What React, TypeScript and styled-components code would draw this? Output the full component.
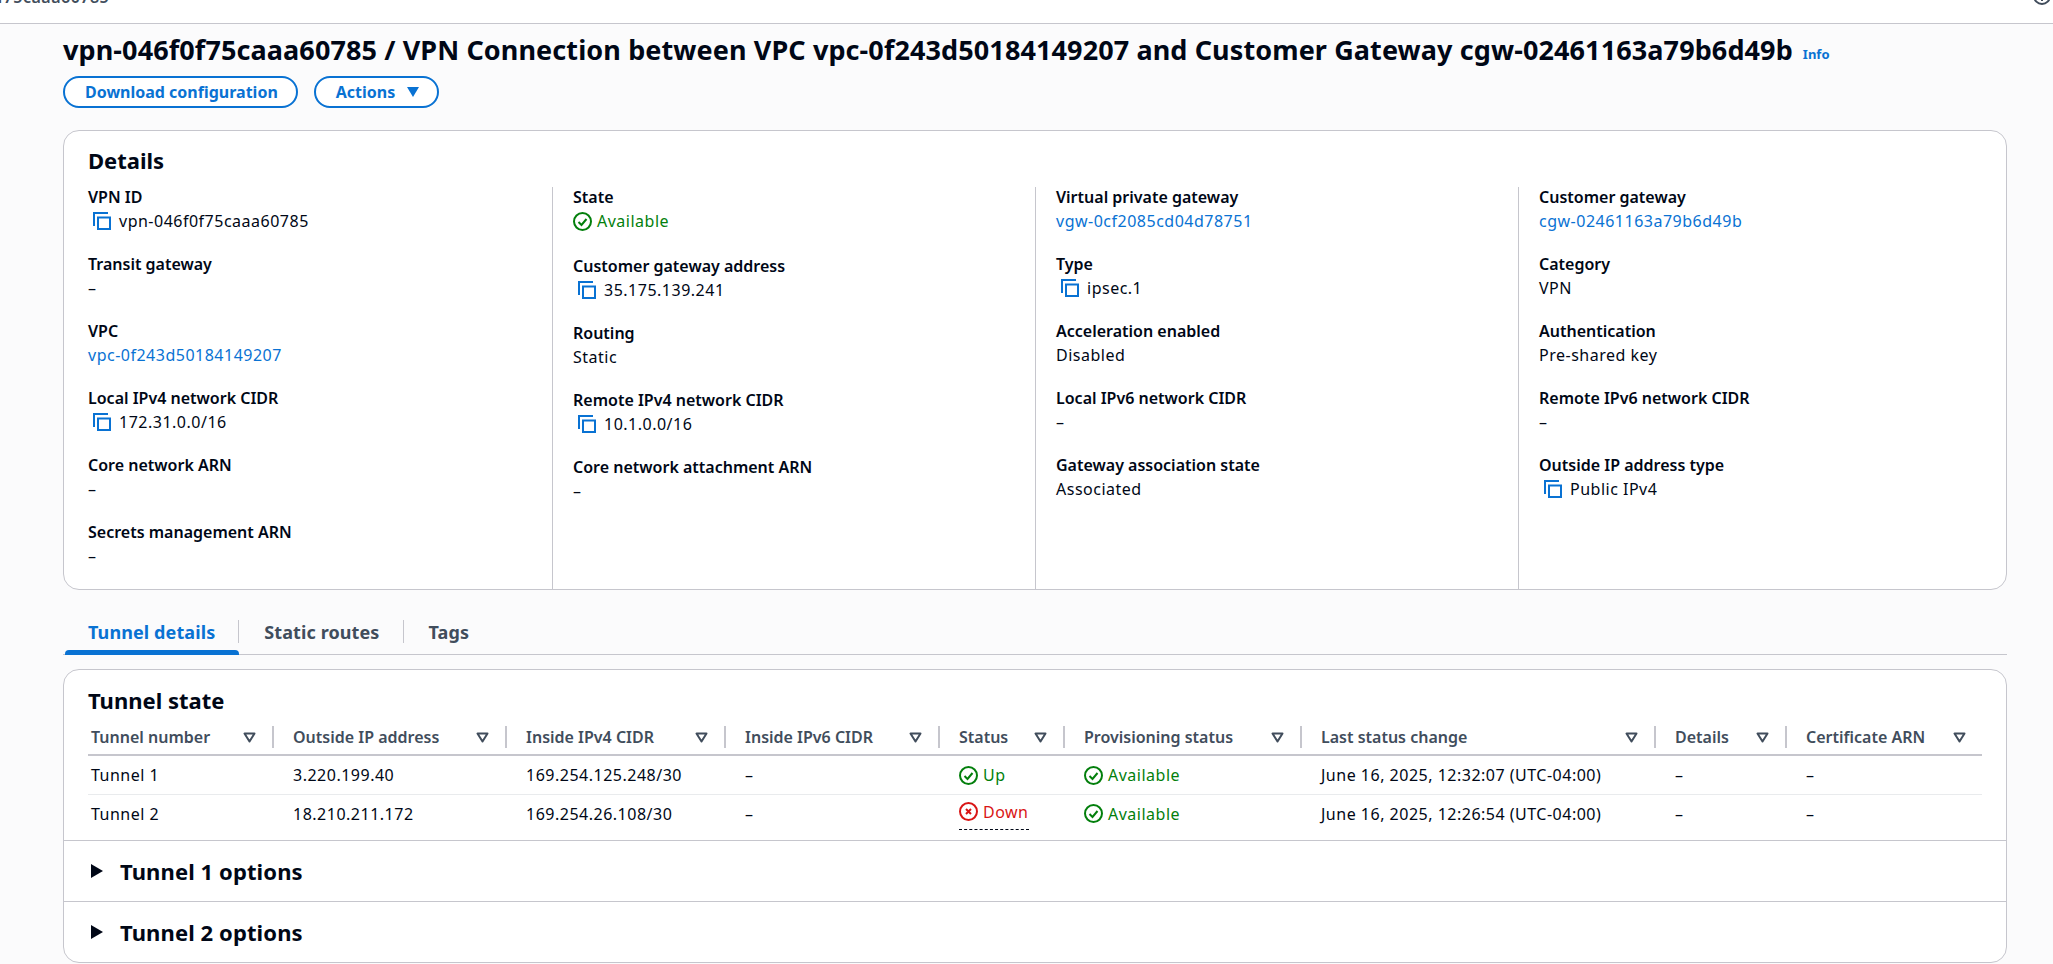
import React from "react"
import styled, { createGlobalStyle } from "styled-components"

const colors = {
	text: "#000716",
	header: "#414d5c",
	link: "#0972d3",
	green: "#037f0c",
	red: "#d91515",
	border: "#c6c6cd",
	rowLine: "#e9ebed",
	page: "#fbfbfc"
}

const tableColumns = "184px 233px 219px 214px 125px 237px 354px 131px 197px"

const GlobalStyle = createGlobalStyle`
	html, body {
		margin: 0;
		padding: 0;
		background: ${colors.page};
		color: ${colors.text};
		font-family: "Noto Sans", "Liberation Sans", sans-serif;
		font-size: 16px;
		letter-spacing: 0.5px;
	}
	* { box-sizing: border-box; }
`

const Page = styled.div`
	width: 2053px;
	height: 964px;
	overflow: hidden;
`

const TopBar = styled.div`
	height: 24px;
	padding-right: 2px;
	background: #fff;
	border-bottom: 1px solid ${colors.border};
	display: flex;
	justify-content: space-between;
	align-items: flex-end;
	overflow: hidden;
`

const CutCrumb = styled.span`
	font-weight: 600;
	line-height: 22px;
	white-space: nowrap;
	color: ${colors.header};
	margin: 0 0 15px -84px;
`

const CutCircle = styled.span`
	width: 18px;
	height: 18px;
	flex: none;
	border: 2px solid ${colors.header};
	border-radius: 50%;
	margin-bottom: 18px;
	display: flex;
	justify-content: center;
	align-items: flex-end;
	&::after {
		content: "";
		width: 2px;
		height: 5px;
		margin-bottom: 2px;
		background: ${colors.header};
	}
`

const Main = styled.main`
	width: 1944px;
	margin-left: 63px;
`

const Title = styled.div`
	height: 52px;
	display: flex;
	align-items: center;
	gap: 10px;
`

const TitleText = styled.h1`
	margin: 0;
	font-size: 27px;
	line-height: 32px;
	font-weight: 700;
	letter-spacing: 0.105px;
	white-space: nowrap;
`

const InfoLink = styled.a`
	font-size: 13px;
	font-weight: 700;
	letter-spacing: 0;
	color: ${colors.link};
	margin-top: 8px;
`

const Actions = styled.div`
	display: flex;
	gap: 16px;
`

const Button = styled.button`
	height: 32px;
	padding: 0 18px 0 20px;
	display: inline-flex;
	align-items: center;
	gap: 12px;
	background: #fff;
	border: 2px solid ${colors.link};
	border-radius: 20px;
	color: ${colors.link};
	font: 700 16px "Noto Sans", sans-serif;
`

const Card = styled.section`
	background: #fff;
	border: 1px solid ${colors.border};
	border-radius: 16px;
`

const DetailsCard = styled(Card)`
	height: 460px;
	margin-top: 22px;
	padding: 16px 24px 0;
`

const CardTitle = styled.h2`
	margin: 0;
	font-size: 22px;
	line-height: 26px;
	font-weight: 700;
	letter-spacing: 0;
`

const Columns = styled.div`
	display: grid;
	grid-template-columns: 464px repeat(3, 483px);
	margin-top: 14px;
	height: 384px;
`

const Column = styled.div`
	padding-left: 20px;
	border-left: 1px solid ${colors.border};
	&:first-child {
		padding-left: 0;
		border-left: none;
	}
`

const Field = styled.div<{ $tall?: boolean }>`
	height: ${(p) => (p.$tall ? 69 : 67)}px;
`

const Label = styled.div`
	font-weight: 600;
	letter-spacing: 0;
	line-height: 20px;
	height: 24px;
`

const Value = styled.div`
	line-height: 20px;
	display: flex;
	align-items: center;
`

const Link = styled.a`
	color: ${colors.link};
`

const CopyWrap = styled.span`
	display: inline-flex;
	margin: 0 8px 0 5px;
`

const StatusRow = styled.span<{ $tone: "ok" | "bad" }>`
	display: inline-flex;
	align-items: center;
	gap: 5px;
	color: ${(p) => (p.$tone === "ok" ? colors.green : colors.red)};
`

const Tabs = styled.nav`
	display: flex;
	height: 40px;
	margin: 25px 0 14px;
	border-bottom: 1px solid ${colors.border};
`

const Tab = styled.div<{ $active?: boolean; $last?: boolean }>`
	position: relative;
	height: 39px;
	padding: 5px 24px 0 25px;
	margin-left: ${(p) => (p.$active ? "2px" : "0")};
	padding-left: ${(p) => (p.$active ? "23px" : "25px")};
	font-size: 18px;
	line-height: 24px;
	font-weight: 700;
	letter-spacing: 0.1px;
	color: ${(p) => (p.$active ? colors.link : colors.header)};
	&::before {
		content: "";
		position: absolute;
		right: 0;
		top: 5px;
		height: 23px;
		width: 1px;
		background: ${colors.border};
		display: ${(p) => (p.$last ? "none" : "block")};
	}
	&::after {
		content: "";
		position: absolute;
		left: 0;
		right: 0;
		bottom: -1px;
		height: 5px;
		border-radius: 4px 4px 0 0;
		background: ${colors.link};
		display: ${(p) => (p.$active ? "block" : "none")};
	}
`

const TunnelCard = styled(Card)`
	height: 294px;
`

const TunnelHead = styled.div`
	height: 170px;
	padding: 17px 24px 0;
`

const Table = styled.div`
	margin-top: 7px;
	width: 1894px;
`

const Row = styled.div<{ $head?: boolean; $last?: boolean }>`
	display: grid;
	grid-template-columns: ${tableColumns};
	align-items: center;
	height: ${(p) => (p.$head ? 36 : p.$last ? 37 : 39)}px;
	border-bottom: ${(p) =>
		p.$last ? "none" : p.$head ? `2px solid ${colors.border}` : `1px solid ${colors.rowLine}`};
`

const HeadCell = styled.div`
	height: 22px;
	padding: 0 16px 0 19px;
	display: flex;
	align-items: center;
	justify-content: space-between;
	font-weight: 600;
	letter-spacing: 0;
	color: ${colors.header};
	border-left: 2px solid ${colors.border};
	&:first-child {
		border-left: none;
		padding-left: 3px;
	}
`

const Cell = styled.div`
	padding-left: 21px;
	display: flex;
	align-items: center;
	&:first-child {
		padding-left: 3px;
	}
`

const Dotted = styled.span`
	border-bottom: 1px dashed ${colors.text};
	padding-bottom: 3px;
	margin-top: 4px;
`

const Expander = styled.div`
	height: 61px;
	border-top: 1px solid ${colors.border};
	padding-left: 27px;
	display: flex;
	align-items: center;
	gap: 17px;
	font-size: 22px;
	font-weight: 700;
	letter-spacing: 0.1px;
`

const Caret = styled.span`
	width: 0;
	height: 0;
	border-left: 12px solid ${colors.text};
	border-top: 7.5px solid transparent;
	border-bottom: 7.5px solid transparent;
`

const ActionsCaret = styled.span`
	width: 0;
	height: 0;
	border-top: 10px solid ${colors.link};
	border-left: 6px solid transparent;
	border-right: 6px solid transparent;
`

const CopyIcon = () => (
	<svg width="18" height="18" viewBox="0 0 18 18" fill="none" stroke={colors.link} strokeWidth="2">
		<path d="M1 14V1h14" />
		<rect x="5" y="5.5" width="12" height="11.5" />
	</svg>
)

const CheckIcon = () => (
	<svg width="19" height="19" viewBox="0 0 19 19" fill="none" stroke={colors.green} strokeWidth="2">
		<circle cx="9.5" cy="9.5" r="8.5" />
		<path d="M5.5 10l3 3 5-6" />
	</svg>
)

const ErrorIcon = () => (
	<svg width="19" height="19" viewBox="0 0 19 19" fill="none" stroke={colors.red} strokeWidth="2">
		<circle cx="9.5" cy="9.5" r="8.5" />
		<path d="M7 7l5 5M12 7l-5 5" />
	</svg>
)

const SortIcon = () => (
	<svg width="13" height="11" viewBox="0 0 13 11" fill="none" stroke={colors.header} strokeWidth="2">
		<path d="M1.5 1.5h10L6.5 9.5z" strokeLinejoin="round" />
	</svg>
)

type FieldData = { label: string; value: React.ReactNode }

const copy = (text: string) => (
	<>
		<CopyWrap>
			<CopyIcon />
		</CopyWrap>
		{text}
	</>
)

const available = (
	<StatusRow $tone="ok">
		<CheckIcon />
		Available
	</StatusRow>
)

const detailColumns: FieldData[][] = [
	[
		{ label: "VPN ID", value: copy("vpn-046f0f75caaa60785") },
		{ label: "Transit gateway", value: "–" },
		{ label: "VPC", value: <Link>vpc-0f243d50184149207</Link> },
		{ label: "Local IPv4 network CIDR", value: copy("172.31.0.0/16") },
		{ label: "Core network ARN", value: "–" },
		{ label: "Secrets management ARN", value: "–" }
	],
	[
		{ label: "State", value: available },
		{ label: "Customer gateway address", value: copy("35.175.139.241") },
		{ label: "Routing", value: "Static" },
		{ label: "Remote IPv4 network CIDR", value: copy("10.1.0.0/16") },
		{ label: "Core network attachment ARN", value: "–" }
	],
	[
		{ label: "Virtual private gateway", value: <Link>vgw-0cf2085cd04d78751</Link> },
		{ label: "Type", value: copy("ipsec.1") },
		{ label: "Acceleration enabled", value: "Disabled" },
		{ label: "Local IPv6 network CIDR", value: "–" },
		{ label: "Gateway association state", value: "Associated" }
	],
	[
		{ label: "Customer gateway", value: <Link>cgw-02461163a79b6d49b</Link> },
		{ label: "Category", value: "VPN" },
		{ label: "Authentication", value: "Pre-shared key" },
		{ label: "Remote IPv6 network CIDR", value: "–" },
		{ label: "Outside IP address type", value: copy("Public IPv4") }
	]
]

const tableHeaders = [
	"Tunnel number",
	"Outside IP address",
	"Inside IPv4 CIDR",
	"Inside IPv6 CIDR",
	"Status",
	"Provisioning status",
	"Last status change",
	"Details",
	"Certificate ARN"
]

const tunnels = [
	{
		name: "Tunnel 1",
		ip: "3.220.199.40",
		cidr: "169.254.125.248/30",
		status: (
			<StatusRow $tone="ok">
				<CheckIcon />
				Up
			</StatusRow>
		),
		changed: "June 16, 2025, 12:32:07 (UTC-04:00)"
	},
	{
		name: "Tunnel 2",
		ip: "18.210.211.172",
		cidr: "169.254.26.108/30",
		status: (
			<Dotted>
				<StatusRow $tone="bad">
					<ErrorIcon />
					Down
				</StatusRow>
			</Dotted>
		),
		changed: "June 16, 2025, 12:26:54 (UTC-04:00)"
	}
]

export default function App() {
	return (
		<Page>
			<GlobalStyle />
			<TopBar>
				<CutCrumb>vpn-046f0f75caaa60785</CutCrumb>
				<CutCircle />
			</TopBar>
			<Main>
				<Title>
					<TitleText>
						vpn-046f0f75caaa60785 / VPN Connection between VPC vpc-0f243d50184149207 and Customer Gateway
						cgw-02461163a79b6d49b
					</TitleText>
					<InfoLink>Info</InfoLink>
				</Title>
				<Actions>
					<Button>Download configuration</Button>
					<Button>
						Actions
						<ActionsCaret />
					</Button>
				</Actions>
				<DetailsCard>
					<CardTitle>Details</CardTitle>
					<Columns>
						{detailColumns.map((fields, i) => (
							<Column key={i}>
								{fields.map((f, j) => (
									<Field key={f.label} $tall={i === 1 && j === 0}>
										<Label>{f.label}</Label>
										<Value>{f.value}</Value>
									</Field>
								))}
							</Column>
						))}
					</Columns>
				</DetailsCard>
				<Tabs>
					<Tab $active>Tunnel details</Tab>
					<Tab>Static routes</Tab>
					<Tab $last>Tags</Tab>
				</Tabs>
				<TunnelCard>
					<TunnelHead>
						<CardTitle>Tunnel state</CardTitle>
						<Table>
							<Row $head>
								{tableHeaders.map((h) => (
									<HeadCell key={h}>
										{h}
										<SortIcon />
									</HeadCell>
								))}
							</Row>
							{tunnels.map((t, i) => (
								<Row key={t.name} $last={i === tunnels.length - 1}>
									<Cell>{t.name}</Cell>
									<Cell>{t.ip}</Cell>
									<Cell>{t.cidr}</Cell>
									<Cell>–</Cell>
									<Cell>{t.status}</Cell>
									<Cell>{available}</Cell>
									<Cell>{t.changed}</Cell>
									<Cell>–</Cell>
									<Cell>–</Cell>
								</Row>
							))}
						</Table>
					</TunnelHead>
					<Expander>
						<Caret />
						Tunnel 1 options
					</Expander>
					<Expander>
						<Caret />
						Tunnel 2 options
					</Expander>
				</TunnelCard>
			</Main>
		</Page>
	)
}
